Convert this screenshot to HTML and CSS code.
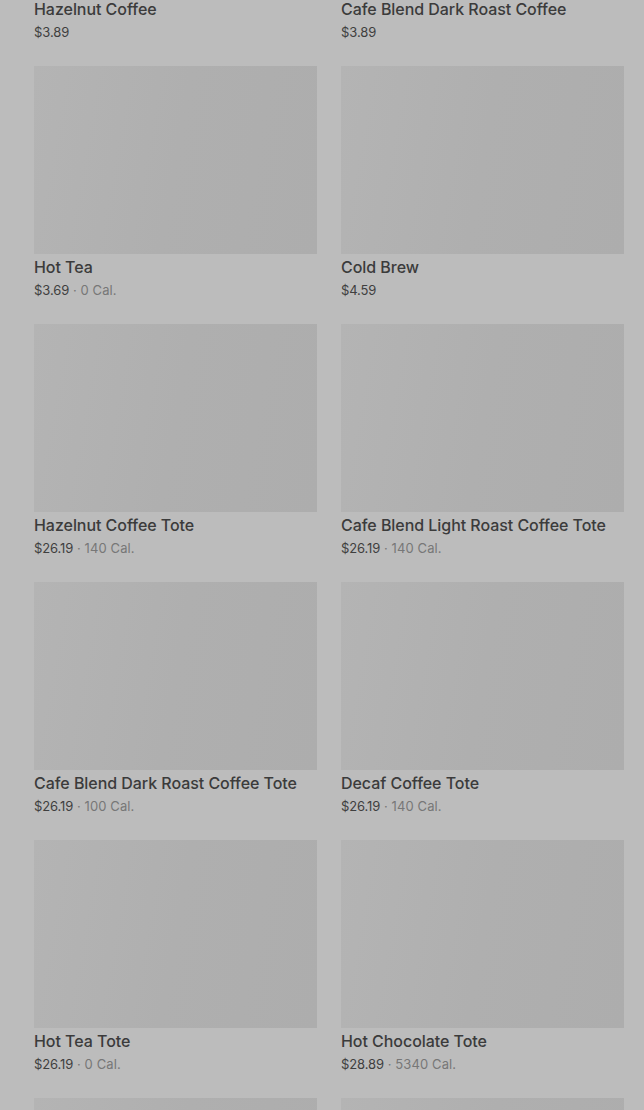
FILE: index.html
```html
<!DOCTYPE html>
<html>
<head>
<meta charset="utf-8">
<link rel="stylesheet" href="styles.css">
</head>
<body>
<main class="grid">
  <div class="card"><div class="thumb"></div><div class="name">Hazelnut Coffee</div><div class="meta"><span class="price">$3.89</span></div></div>
  <div class="card"><div class="thumb"></div><div class="name">Cafe Blend Dark Roast Coffee</div><div class="meta"><span class="price">$3.89</span></div></div>
  <div class="card"><div class="thumb"></div><div class="name">Hot Tea</div><div class="meta"><span class="price">$3.69</span><span class="cal"> · 0 Cal.</span></div></div>
  <div class="card"><div class="thumb"></div><div class="name">Cold Brew</div><div class="meta"><span class="price">$4.59</span></div></div>
  <div class="card"><div class="thumb"></div><div class="name">Hazelnut Coffee Tote</div><div class="meta"><span class="price">$26.19</span><span class="cal"> · 140 Cal.</span></div></div>
  <div class="card"><div class="thumb"></div><div class="name">Cafe Blend Light Roast Coffee Tote</div><div class="meta"><span class="price">$26.19</span><span class="cal"> · 140 Cal.</span></div></div>
  <div class="card"><div class="thumb"></div><div class="name">Cafe Blend Dark Roast Coffee Tote</div><div class="meta"><span class="price">$26.19</span><span class="cal"> · 100 Cal.</span></div></div>
  <div class="card"><div class="thumb"></div><div class="name">Decaf Coffee Tote</div><div class="meta"><span class="price">$26.19</span><span class="cal"> · 140 Cal.</span></div></div>
  <div class="card"><div class="thumb"></div><div class="name">Hot Tea Tote</div><div class="meta"><span class="price">$26.19</span><span class="cal"> · 0 Cal.</span></div></div>
  <div class="card"><div class="thumb"></div><div class="name">Hot Chocolate Tote</div><div class="meta"><span class="price">$28.89</span><span class="cal"> · 5340 Cal.</span></div></div>
  <div class="card"><div class="thumb"></div></div>
  <div class="card"><div class="thumb"></div></div>
</main>
</body>
</html>
```
FILE: styles.css
```css
html, body {
  margin: 0;
  padding: 0;
  background: #bcbcbc;
  overflow: hidden;
  height: 1110px;
}
body {
  font-family: Inter, "Liberation Sans", sans-serif;
}
.grid {
  display: grid;
  grid-template-columns: 283px 283px;
  column-gap: 24px;
  row-gap: 25px;
  padding: 0 20px 0 34px;
  margin-top: -192px;
}
.thumb {
  height: 188px;
  background: linear-gradient(100deg, #b4b4b4 0%, #afafaf 50%, #adadad 100%);
}
.name {
  margin-top: 3px;
  font-size: 16px;
  line-height: 20px;
  font-weight: 500;
  color: #3b3b3b;
  white-space: nowrap;
  letter-spacing: -0.05px;
}
.meta {
  margin-top: 4px;
  font-size: 13px;
  line-height: 18px;
  white-space: nowrap;
  letter-spacing: -0.1px;
}
.price {
  color: #3f3f3f;
}
.cal {
  color: #777777;
  letter-spacing: 0.1px;
}
```
